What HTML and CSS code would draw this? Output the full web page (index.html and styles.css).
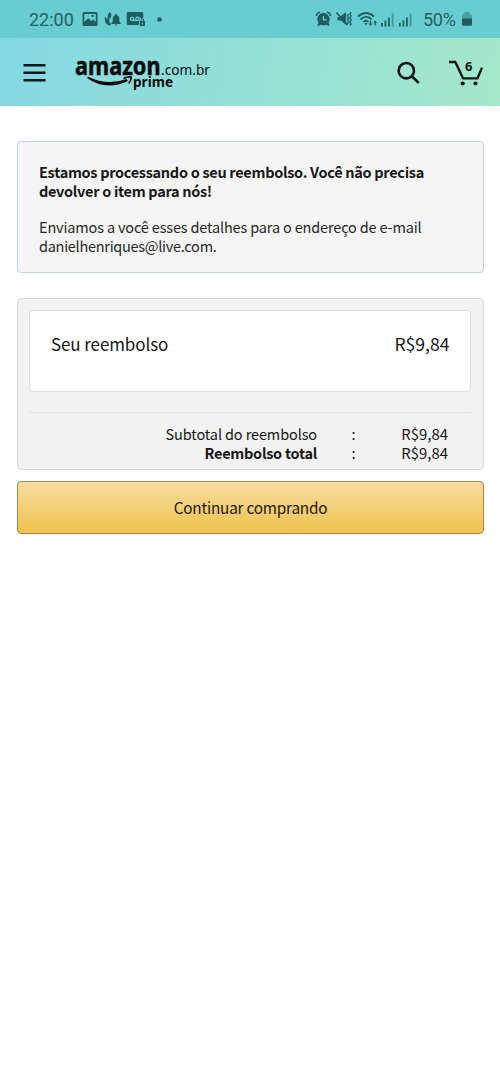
FILE: index.html
```html
<!DOCTYPE html>
<html lang="pt-BR">
<head>
<meta charset="utf-8">
<meta name="viewport" content="width=device-width, initial-scale=1">
<title>Seu reembolso</title>
<link rel="stylesheet" href="styles.css">
</head>
<body>
<div class="status">
  <span class="clock">22:00</span>
  <svg class="status-left" width="84" height="20" viewBox="0 0 84 20">
    <path fill-rule="evenodd" d="M3 2h12q1.500 0 1.500 1.500v11q0 1.500-1.500 1.500H3q-1.500 0-1.500-1.500v-11Q1.500 2 3 2zM3.300 4v8l4-4 3 3 2-1.500 2.500 2.500V4zM10.500 5h2v2h-2z"/>
    <path d="M28.500 2c2.500 2 2.500 4.500.3 6.500-1.300 1.500-.8 3.500.7 5l.5 2c-4 0-7-3-6-9l2.500 3c0-3 .5-5.500 2-7.500z"/>
    <path d="M30.300 14v-1l1.400-1.500V9c0-2 1-3.300 2.600-3.700V4h1.500v1.300c1.600.4 2.600 1.700 2.600 3.700v2.500l1.400 1.500v1zM33.500 14.500h3l-1.500 1.500z"/>
    <path fill-rule="evenodd" d="M47 2h14q1.300 0 1.300 1.300V8H61c-2 0-3 1-3 2.500V15H47q-1.300 0-1.300-1.300V3.300Q45.700 2 47 2zM51 6.500a2.200 2.200 0 1 0 0 4.400h5.500a2.200 2.200 0 1 0-2-1.500h-1.400A2.200 2.200 0 0 0 51 6.500zM51 7.700a1 1 0 1 1 0 2 1 1 0 0 1 0-2zM56.500 7.700a1 1 0 1 1 0 2 1 1 0 0 1 0-2z"/>
    <path fill-rule="evenodd" d="M59.500 11v-1a1.800 1.800 0 0 1 3.600 0v1h.9v5h-5.200v-5zM60.500 11h1.600v-1a.8.800 0 0 0-1.600 0zM60.900 12.500v2h1v-2z"/>
    <circle cx="78.500" cy="9.500" r="2.300"/>
  </svg>
  <svg class="status-right" width="102" height="20" viewBox="0 0 102 20">
    <path fill-rule="evenodd" d="M8.500 3a6.200 6.200 0 0 1 5 9.800l1.200 2.900h-2l-1.200-1.200a6 6 0 0 1-6 0l-1.200 1.200h-2l1.200-2.900A6.200 6.200 0 0 1 8.500 3zM7.800 6v4.500h4V9.200H9.100V6z"/>
    <path class="line" d="M1.500 6C1.500 4 3 2.500 5 2.200M12 2.200c2 .3 3.500 1.800 3.500 3.800" stroke-width="1.600"/>
    <path d="M22.500 7H25l6-5v13l-5-4.500h-3.500z"/>
    <path class="line" d="M21.500 2.500L32.500 15" stroke-width="1.600"/>
    <path class="line" d="M33.500 4l-1 2 1 2-1 2 1 2-1 2M36 2l-1 2 1 2-1 2 1 2-1 2 1 2-1 1.500" stroke-width="1.400"/>
    <path class="line" d="M43 6.500Q51-.5 59 6.500M45.500 9.500Q51 4.500 56.500 9M48.300 12Q51 9.500 53.500 12" stroke-width="1.700"/>
    <path d="M49.500 13h3L51 15.500zM55.500 16l-2-2.500h1.400V10.500h1.200v3H57.500zM59.700 15.500V13h-1.500l2-2.500 2 2.500h-1.300v2.500z"/>
    <path d="M66 13h1.800v3.500H66zM69.500 10.500h1.800v6h-1.800zM73 7.500h1.800v9H73zM84 13h1.800v3.500H84zM87.500 10.500h1.800v6h-1.800zM91 7.500h1.800v9H91z"/>
    <path opacity=".5" d="M76.700 3.500h1.800v13h-1.800zM94.700 3.500h1.800v13h-1.800z"/>
  </svg>
  <span class="percent">50%</span>
  <svg class="battery" width="12" height="20" viewBox="0 0 12 20">
    <path opacity=".4" d="M3.500 3h5v2h.5q2 0 2 2v3H1V7q0-2 2-2h.5z"/>
    <path d="M1 9.500h10v5.700q0 1.500-1.500 1.500h-7Q1 16.700 1 15.200z"/>
  </svg>
</div>
<header class="header">
  <svg class="menu" width="24" height="20" viewBox="0 0 24 20"><path d="M.5 2.200h22M.5 9.700h22M.5 17.200h22" /></svg>
  <svg class="logo" width="140" height="40" viewBox="0 -2 140 40">
    <text class="brand" x="0" y="20.500" textLength="85.500" lengthAdjust="spacingAndGlyphs">amazon</text>
    <text class="domain" x="86" y="20.700" textLength="49" lengthAdjust="spacingAndGlyphs">.com.br</text>
    <text class="prime" x="58" y="33" textLength="40" lengthAdjust="spacingAndGlyphs">prime</text>
    <path d="M13 22.500Q32 32.300 51.500 25L53 27Q31 37.500 12 24z"/>
    <path class="arrow" d="M48.500 24.500Q52.500 22.700 56.300 23Q56.300 26 53.800 29.500"/>
  </svg>
  <svg class="search" width="24" height="24" viewBox="0 0 24 24"><circle cx="10.300" cy="10.700" r="7.700"/><path d="M15.800 16.200L22 22.200"/></svg>
  <svg class="cart" width="36" height="28" viewBox="0 0 36 28">
    <path d="M1 4h6.300L15 20.300h14.500L34 9.600"/>
    <circle cx="14.700" cy="25.500" r="2.100"/><circle cx="27.500" cy="25.500" r="2.100"/>
    <text x="17" y="12.700">6</text>
  </svg>
</header>
<main class="content">
  <section class="notice">
    <h1 class="notice-title">Estamos processando o seu reembolso. Você não precisa<br>devolver o item para nós!</h1>
    <p class="notice-text">Enviamos a você esses detalhes para o endereço de e-mail<br><span class="email">danielhenriques@live.com.</span></p>
  </section>
  <section class="refund">
    <div class="card"><span class="card-label">Seu reembolso</span><span class="card-value">R$9,84</span></div>
    <div class="totals">
      <span class="label">Subtotal do reembolso</span><span class="colon">:</span><span class="amount">R$9,84</span>
      <span class="label total">Reembolso total</span><span class="colon">:</span><span class="amount">R$9,84</span>
    </div>
  </section>
  <button class="continue" type="button"><span>Continuar comprando</span></button>
</main>
</body>
</html>
```
FILE: styles.css
```css
* { box-sizing: border-box; }
body {
  margin: 0;
  min-height: 1082px;
  background: #fff;
  color: #171717;
  font-family: "Noto Sans CJK JP", "Noto Sans", sans-serif;
  font-size: 14.500px;
  line-height: 19.400px;
}
svg { display: block; flex: none; overflow: visible; }
.status {
  display: flex;
  align-items: center;
  height: 38px;
  padding: 0 27px 0 29px;
  background: #67cdd0;
  color: #285f64;
  fill: #205c60;
  font: 18px/20px Roboto, sans-serif;
}
.clock { width: 52px; margin-top: 2px; }
.status-left { margin-top: 1px; }
.status-right { margin: 1px 0 0 auto; }
.line { fill: none; stroke: #205c60; }
.percent { width: 33px; margin: 2px 5px 0 6px; letter-spacing: -.3px; }
.header {
  display: flex;
  align-items: center;
  height: 68px;
  padding: 0 16px 0 23px;
  background: linear-gradient(100deg, #84d8e2, #a5e7ca);
}
.menu { margin-top: 1px; stroke: #07171b; stroke-width: 2.400; }
.logo { margin: 0 0 0 28px; fill: #080d0e; }
.brand { font: bold 25px "Noto Sans", sans-serif; stroke: #080d0e; stroke-width: .5; }
.domain { font: 14px "Noto Sans", sans-serif; }
.prime { font: bold 14px "Noto Sans", sans-serif; }
.arrow { fill: none; stroke: #080d0e; stroke-width: 1.700; }
.search { margin-left: auto; fill: none; stroke: #0c1715; stroke-width: 2.600; stroke-linecap: round; }
.cart { margin-left: 28px; fill: #0c1715; }
.cart path { fill: none; stroke: #0c1715; stroke-width: 2.300; }
.cart text { font: bold 13px "Noto Sans", sans-serif; }
.content { padding: 35px 16px 0 17px; }
.notice {
  height: 132px;
  padding: 20px 21px;
  background: #f5f5f5;
  border: 1px solid #b9d5e1;
  border-radius: 4px;
}
.notice-title { margin: 0 0 16px; font-size: 14.500px; line-height: inherit; font-weight: 700; letter-spacing: -.3px; white-space: nowrap; }
.notice-text { margin: 0; color: #272727; letter-spacing: -.16px; white-space: nowrap; }
.email { letter-spacing: -.28px; }
.refund {
  height: 172px;
  margin-top: 25px;
  padding: 11px 12px 0 11px;
  background: #f2f2f2;
  border: 1px solid #dadada;
  border-radius: 4px;
}
.card {
  display: flex;
  justify-content: space-between;
  height: 82px;
  padding: 19px 20.500px 18px 21px;
  background: #fff;
  border: 1px solid #dcdcdc;
  border-radius: 4px;
  font-size: 17.600px;
  line-height: 28px;
}
.card-label { font-size: 17px; letter-spacing: -.1px; }
.totals {
  display: grid;
  grid-template-columns: 288px 73px 58px;
  margin-top: 20px;
  padding-top: 11px;
  border-top: 1px solid #e0e0e0;
}
.label { text-align: right; letter-spacing: -.12px; }
.total { font-weight: 700; letter-spacing: -.27px; }
.colon { text-align: center; }
.amount { text-align: right; font-size: 14.900px; }
.continue {
  display: block;
  width: 100%;
  height: 53px;
  margin-top: 11px;
  padding: 0 0 2px;
  border: 1px solid #a58b45;
  border-radius: 4px;
  background: linear-gradient(#f6dda2, #f0c14b);
  color: #241a08;
  font: 15.300px/20px "Noto Sans CJK JP", "Noto Sans", sans-serif;
  letter-spacing: -.2px;
}
```
